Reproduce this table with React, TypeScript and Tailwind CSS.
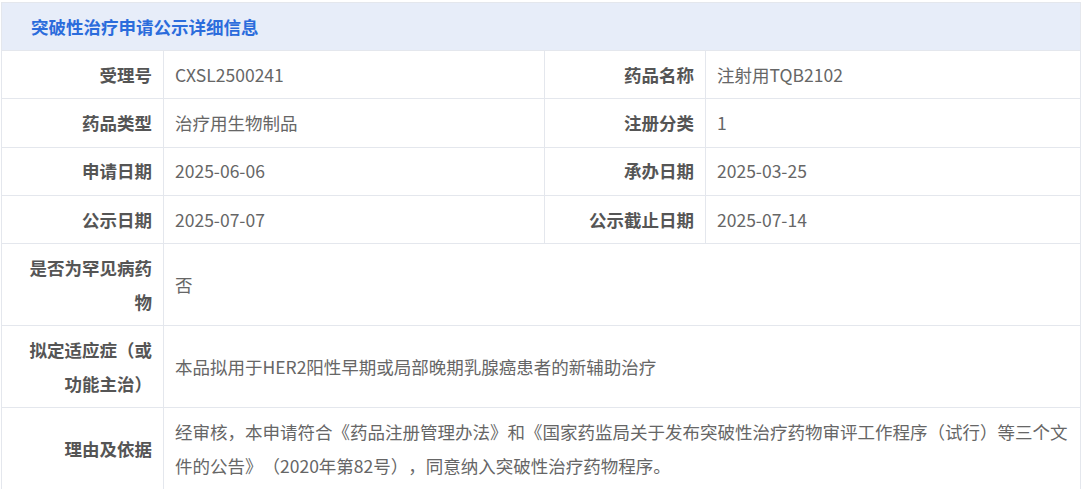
import React from "react";

const font = { fontFamily: '"Noto Sans CJK SC", "Noto Sans", sans-serif' };

function Label({ children, last = false }: { children: React.ReactNode; last?: boolean }) {
  return (
    <div className={`flex items-center justify-end text-right border-r border-[#e4e7ed] pl-[11px] pr-[11px] py-[6.75px] font-bold text-[#555555] ${last ? "" : "border-b"}`}>
      <span>{children}</span>
    </div>
  );
}

function Value({ children, right = false, last = false, span = false }: { children: React.ReactNode; right?: boolean; last?: boolean; span?: boolean }) {
  return (
    <div className={`flex items-center pl-[11px] pr-[8px] py-[6.75px] text-[#666666] border-[#e4e7ed] ${right || span ? "" : "border-r"} ${last ? "" : "border-b"} ${span ? "col-span-3" : ""}`}>
      <span>{children}</span>
    </div>
  );
}

export default function App() {
  return (
    <div className="w-[1081px] h-[489px] overflow-hidden bg-white [text-spacing-trim:space-all]" style={font}>
      <div className="ml-[1px] mt-[2px] w-[1080px] border border-[#e4e7ed] text-[17.5px] leading-[33.75px]">
        <div className="h-[48px] bg-[#e7edf9] border-b border-[#e4e7ed] flex items-center pl-[29px] font-bold text-[#2b6cdc]">
          突破性治疗申请公示详细信息
        </div>
        <div className="grid grid-cols-[162px_381px_161px_1fr]">
          <Label>受理号</Label>
          <Value>CXSL2500241</Value>
          <Label>药品名称</Label>
          <Value right>注射用TQB2102</Value>

          <Label>药品类型</Label>
          <Value>治疗用生物制品</Value>
          <Label>注册分类</Label>
          <Value right>1</Value>

          <Label>申请日期</Label>
          <Value>2025-06-06</Value>
          <Label>承办日期</Label>
          <Value right>2025-03-25</Value>

          <Label>公示日期</Label>
          <Value>2025-07-07</Value>
          <Label>公示截止日期</Label>
          <Value right>2025-07-14</Value>

          <Label>是否为罕见病药物</Label>
          <Value span>否</Value>

          <Label>拟定适应症（或功能主治）</Label>
          <Value span>本品拟用于HER2阳性早期或局部晚期乳腺癌患者的新辅助治疗</Value>

          <Label last>理由及依据</Label>
          <Value span last>
            经审核，本申请符合《药品注册管理办法》和《国家药监局关于发布突破性治疗药物审评工作程序（试行）等三个文
            <br />
            件的公告》（2020年第82号），同意纳入突破性治疗药物程序。
          </Value>
        </div>
      </div>
    </div>
  );
}
